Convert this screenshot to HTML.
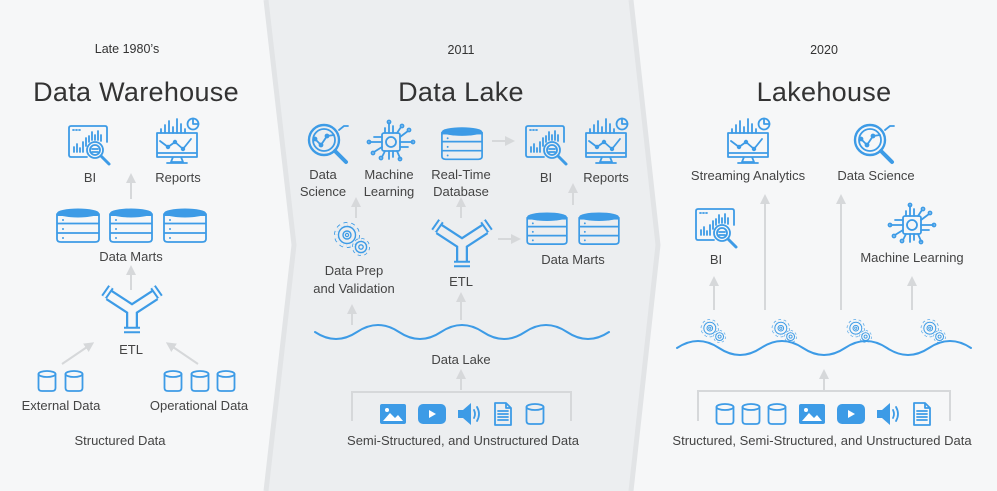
<!DOCTYPE html>
<html><head><meta charset="utf-8"><style>
html,body{margin:0;padding:0;background:#f6f7f8;}
svg{display:block}
text{font-family:"Liberation Sans",sans-serif;fill:#3a3a3a;}
.l{font-size:13px;text-anchor:middle;fill:#444}
.h{font-size:27px;text-anchor:middle;fill:#333;letter-spacing:0.3px}
.y{font-size:12.5px;text-anchor:middle;fill:#333}
.b{stroke:#3d9be6;fill:none;stroke-width:1.8;stroke-linecap:round;stroke-linejoin:round}
.f{fill:#3d9be6}
.ar{stroke:#d6d8da;stroke-width:2;fill:none}
</style></head><body>
<svg width="997" height="491" viewBox="0 0 997 491" xmlns="http://www.w3.org/2000/svg">
<defs>
<symbol id="db" viewBox="0 0 46 36" overflow="visible">
 <path class="b" d="M2,6 V31 Q2,34 6,34 H40 Q44,34 44,31 V6 M2,15.5 H44 M2,25 H44"/>
 <ellipse class="f" cx="23" cy="5" rx="21" ry="4.5"/>
 <rect class="f" x="2" y="5" width="42" height="3"/>
 <circle class="f" cx="8" cy="12" r="1"/><circle class="f" cx="8" cy="21" r="1"/><circle class="f" cx="8" cy="30" r="1"/>
</symbol>
<symbol id="cyl" viewBox="0 0 20 22" overflow="visible">
 <ellipse class="b" cx="10" cy="4" rx="8.5" ry="3"/>
 <path class="b" d="M1.5,4 V18 Q1.5,21 5,21 H15 Q18.5,21 18.5,18 V4"/>
</symbol>
<symbol id="bi" viewBox="0 0 44 42" overflow="visible">
 <path class="b" d="M19,33 H3 Q1,33 1,31 V4 Q1,2 3,2 H37 Q39,2 39,4 V18"/>
 <path class="b" d="M5,6 h1 M8,6 h1 M11,6 h1"/>
 <path class="b" d="M6,28 v-5 M9,28 v-8 M12,28 v-4 M15,28 v-10 M18,22 v-8 M21,18 v-6 M24,16 v-8 M27,16 v-5 M30,16 v-9 M33,17 v-6"/>
 <circle class="b" cx="27" cy="26" r="8"/><circle class="b" cx="27" cy="26" r="5"/>
 <path class="b" d="M24,25 h6 M24,28 h6"/>
 <path class="b" d="M33,32 L41,40" style="stroke-width:3"/>
</symbol>
<symbol id="rep" viewBox="0 0 48 48" overflow="visible">
 <path class="b" d="M4,16 H44 V40 H4 Z M4,36 H44 M20,40 l-2,5 H30 l-2,-5 M14,46 H34"/>
 <path class="b" d="M8,16 v-4 M12,16 v-8 M16,16 v-12 M20,16 v-6 M24,16 v-14 M28,16 v-9 M32,16 v-4"/>
 <circle class="b" cx="40" cy="7" r="5.5"/><path class="b" d="M40,7 V1.5 M40,7 H45.5"/>
 <path class="b" d="M7,24 L15,30 L22,25 L30,32 L38,22"/>
 <circle class="b" cx="15" cy="30" r="1.3"/><circle class="b" cx="22" cy="25" r="1.3"/><circle class="b" cx="30" cy="32" r="1.3"/>
</symbol>
<symbol id="ds" viewBox="0 0 44 42" overflow="visible">
 <circle class="b" cx="18" cy="18" r="15" style="stroke-width:2.4"/>
 <circle class="b" cx="18" cy="18" r="11"/>
 <path class="b" d="M29,29 L40,40" style="stroke-width:4"/>
 <path class="b" d="M9,17 L15,23 L21,14 L28,13 M33,8 L38,4 H42"/>
 <circle class="b" cx="9" cy="17" r="1.5"/><circle class="b" cx="15" cy="23" r="1.5"/><circle class="b" cx="21" cy="14" r="1.5"/>
</symbol>
<symbol id="ml" viewBox="0 0 48 44" overflow="visible">
 <rect class="b" x="15" y="13" width="18" height="18" rx="2"/>
 <circle class="b" cx="24" cy="22" r="5"/>
 <path class="b" d="M18,13 v-5 M22,13 V3 M26,13 V6 M30,13 l4,-6 M18,31 l-3,6 M22,31 v8 M26,31 v6 M30,31 l3,7 M15,17 H7 M15,22 H3 M15,27 l-8,5 M33,17 l8,-6 M33,22 H45 M33,27 H41"/>
 <circle class="b" cx="22" cy="2" r="1.5"/><circle class="b" cx="35" cy="6" r="1.5"/><circle class="b" cx="14" cy="38" r="1.5"/><circle class="b" cx="33" cy="39" r="1.5"/><circle class="b" cx="2" cy="22" r="1.5"/><circle class="b" cx="6" cy="33" r="1.5"/><circle class="b" cx="42" cy="10" r="1.5"/><circle class="b" cx="46" cy="22" r="1.5"/>
</symbol>
<symbol id="gear" viewBox="0 0 40 34" overflow="visible">
 <circle cx="14" cy="13" r="10.5" style="fill:none;stroke:#3d9be6;stroke-width:5;stroke-dasharray:3.3 3.3"/>
 <circle cx="14" cy="13" r="10.5" style="fill:none;stroke:var(--bg);stroke-width:3.2;stroke-dasharray:3.3 3.3"/>
 <circle cx="14" cy="13" r="8.5" style="fill:var(--bg);stroke:#3d9be6;stroke-width:1.4"/>
 <circle class="b" cx="14" cy="13" r="4" style="stroke-width:1.4"/><circle class="b" cx="14" cy="13" r="1.6" style="stroke-width:1.2"/>
 <circle cx="28" cy="25" r="7" style="fill:none;stroke:#3d9be6;stroke-width:4;stroke-dasharray:2.7 2.8"/>
 <circle cx="28" cy="25" r="7" style="fill:none;stroke:var(--bg);stroke-width:2.4;stroke-dasharray:2.7 2.8"/>
 <circle cx="28" cy="25" r="5.6" style="fill:var(--bg);stroke:#3d9be6;stroke-width:1.4"/>
 <circle class="b" cx="28" cy="25" r="2.2" style="stroke-width:1.3"/>
</symbol>
<symbol id="etl" viewBox="0 0 60 48" overflow="visible">
 <path d="M7,9 L30,24 L53,9 M30,24 V44" style="fill:none;stroke:#3d9be6;stroke-width:12;stroke-linejoin:miter"/>
 <path d="M7,9 L30,24 L53,9 M30,24 V44" style="fill:none;stroke:var(--bg);stroke-width:7.5;stroke-linejoin:miter"/>
 <path d="M2,11 L9,1 M51,1 L58,11 M22,44 H38" style="fill:none;stroke:#3d9be6;stroke-width:6.5"/>
 <path d="M2,11 L9,1 M51,1 L58,11 M22,44 H38" style="fill:none;stroke:var(--bg);stroke-width:2.5"/>
</symbol>
<symbol id="img" viewBox="0 0 26 20" overflow="visible">
 <rect class="f" x="0" y="0" width="26" height="20" rx="2"/>
 <path d="M3,17 L10,9 L15,14 L18,11 L23,17 Z" fill="#fff"/><circle cx="7" cy="6" r="2" fill="#fff"/>
</symbol>
<symbol id="vid" viewBox="0 0 28 20" overflow="visible">
 <rect class="f" x="0" y="0" width="28" height="20" rx="5"/><path d="M11,6 L18,10 L11,14 Z" fill="#fff"/>
</symbol>
<symbol id="spk" viewBox="0 0 24 24" overflow="visible">
 <path class="f" d="M1,8 H6 L14,1 V23 L6,16 H1 Z"/>
 <path class="b" d="M17,8 Q19,12 17,16 M20,5 Q24,12 20,19"/>
</symbol>
<symbol id="doc" viewBox="0 0 18 24" overflow="visible">
 <path class="b" d="M1,1 H12 L17,6 V23 H1 Z M12,1 V6 H17 M4,9 H14 M4,12 H14 M4,15 H14 M4,18 H14"/>
</symbol>
<marker id="m" viewBox="0 0 10 10" refX="5" refY="5" markerWidth="5" markerHeight="5" orient="auto"><path d="M0,0 L10,5 L0,10 Z" fill="#d6d8da"/></marker>
</defs>

<polygon points="266,0 631,0 658,245 631,491 266,491 294,245" fill="#eceef0"/>
<polyline points="266,0 294,245 266,491" fill="none" stroke="#e2e4e6" stroke-width="5"/>
<polyline points="631,0 658,245 631,491" fill="none" stroke="#e2e4e6" stroke-width="5"/>

<!-- LEFT -->
<text class="y" x="127" y="53">Late 1980’s</text>
<text class="h" x="136" y="101">Data Warehouse</text>
<use href="#bi" x="68" y="124" width="44" height="42"/>
<use href="#rep" x="153" y="117" width="48" height="48"/>
<text class="l" x="90" y="182">BI</text>
<text class="l" x="178" y="182">Reports</text>
<line class="ar" x1="131" y1="199" x2="131" y2="178" marker-end="url(#m)"/>
<use href="#db" x="55" y="208" width="46" height="36"/>
<use href="#db" x="108" y="208" width="46" height="36"/>
<use href="#db" x="162" y="208" width="46" height="36"/>
<text class="l" x="131" y="261">Data Marts</text>
<line class="ar" x1="131" y1="290" x2="131" y2="270" marker-end="url(#m)"/>
<use href="#etl" x="102" y="286" width="60" height="48" style="--bg:#f6f7f8"/>
<text class="l" x="131" y="354">ETL</text>
<line class="ar" x1="62" y1="364" x2="90" y2="345" marker-end="url(#m)"/>
<line class="ar" x1="198" y1="364" x2="170" y2="345" marker-end="url(#m)"/>
<use href="#cyl" x="37" y="370" width="20" height="22"/>
<use href="#cyl" x="64" y="370" width="20" height="22"/>
<use href="#cyl" x="163" y="370" width="20" height="22"/>
<use href="#cyl" x="190" y="370" width="20" height="22"/>
<use href="#cyl" x="216" y="370" width="20" height="22"/>
<text class="l" x="61" y="410">External Data</text>
<text class="l" x="199" y="410">Operational Data</text>
<text class="l" x="120" y="445">Structured Data</text>

<!-- MIDDLE -->
<text class="y" x="461" y="54">2011</text>
<text class="h" x="461" y="101">Data Lake</text>
<use href="#ds" x="306" y="122" width="44" height="42"/>
<use href="#ml" x="367" y="120" width="48" height="44"/>
<use href="#db" x="440" y="126" width="44" height="36"/>
<line class="ar" x1="492" y1="141" x2="510" y2="141" marker-end="url(#m)"/>
<use href="#bi" x="525" y="124" width="44" height="42"/>
<use href="#rep" x="582" y="117" width="48" height="48"/>
<text class="l" x="323" y="179">Data</text><text class="l" x="323" y="196">Science</text>
<text class="l" x="389" y="179">Machine</text><text class="l" x="389" y="196">Learning</text>
<text class="l" x="461" y="179">Real-Time</text><text class="l" x="461" y="196">Database</text>
<text class="l" x="546" y="182">BI</text>
<text class="l" x="606" y="182">Reports</text>
<line class="ar" x1="573" y1="205" x2="573" y2="188" marker-end="url(#m)"/>
<line class="ar" x1="356" y1="218" x2="356" y2="202" marker-end="url(#m)"/>
<line class="ar" x1="461" y1="218" x2="461" y2="202" marker-end="url(#m)"/>
<use href="#gear" x="333" y="222" width="40" height="34" style="--bg:#eceef0"/>
<text class="l" x="354" y="275">Data Prep</text><text class="l" x="354" y="293">and Validation</text>
<use href="#etl" x="432" y="220" width="60" height="48" style="--bg:#eceef0"/>
<text class="l" x="461" y="286">ETL</text>
<line class="ar" x1="498" y1="239" x2="516" y2="239" marker-end="url(#m)"/>
<use href="#db" x="525" y="212" width="44" height="34"/>
<use href="#db" x="577" y="212" width="44" height="34"/>
<text class="l" x="573" y="264">Data Marts</text>
<line class="ar" x1="352" y1="325" x2="352" y2="309" marker-end="url(#m)"/>
<line class="ar" x1="461" y1="320" x2="461" y2="297" marker-end="url(#m)"/>
<path class="b" d="M315,332 q21,14 42,0 t42,0 t42,0 t42,0 t42,0 t42,0 t42,0" style="stroke-width:2"/>
<text class="l" x="461" y="364">Data Lake</text>
<line class="ar" x1="461" y1="390" x2="461" y2="374" marker-end="url(#m)"/>
<path class="ar" d="M352,421 V392 H571 V421"/>
<use href="#img" x="380" y="404" width="26" height="20"/>
<use href="#vid" x="418" y="404" width="28" height="20"/>
<use href="#spk" x="457" y="402" width="24" height="24"/>
<use href="#doc" x="494" y="402" width="18" height="24"/>
<use href="#cyl" x="525" y="403" width="20" height="22"/>
<text class="l" x="463" y="445">Semi-Structured, and Unstructured Data</text>

<!-- RIGHT -->
<text class="y" x="824" y="54">2020</text>
<text class="h" x="824" y="101">Lakehouse</text>
<use href="#rep" x="724" y="117" width="48" height="48"/>
<use href="#ds" x="852" y="122" width="44" height="42"/>
<text class="l" x="748" y="180">Streaming Analytics</text>
<text class="l" x="876" y="180">Data Science</text>
<use href="#bi" x="695" y="207" width="44" height="42"/>
<text class="l" x="716" y="264">BI</text>
<use href="#ml" x="888" y="203" width="48" height="44"/>
<text class="l" x="912" y="262">Machine Learning</text>
<line class="ar" x1="714" y1="310" x2="714" y2="281" marker-end="url(#m)"/>
<line class="ar" x1="765" y1="310" x2="765" y2="199" marker-end="url(#m)"/>
<line class="ar" x1="841" y1="310" x2="841" y2="199" marker-end="url(#m)"/>
<line class="ar" x1="912" y1="310" x2="912" y2="281" marker-end="url(#m)"/>
<use href="#gear" x="700" y="319" width="28" height="24" style="--bg:#f6f7f8"/>
<use href="#gear" x="771" y="319" width="28" height="24" style="--bg:#f6f7f8"/>
<use href="#gear" x="846" y="319" width="28" height="24" style="--bg:#f6f7f8"/>
<use href="#gear" x="920" y="319" width="28" height="24" style="--bg:#f6f7f8"/>
<path class="b" d="M677,348 q21,-14 42,0 t42,0 t42,0 t42,0 t42,0 t42,0 t42,0" style="stroke-width:2"/>
<line class="ar" x1="824" y1="390" x2="824" y2="374" marker-end="url(#m)"/>
<path class="ar" d="M698,421 V391 H950 V421"/>
<use href="#cyl" x="715" y="403" width="20" height="22"/>
<use href="#cyl" x="741" y="403" width="20" height="22"/>
<use href="#cyl" x="767" y="403" width="20" height="22"/>
<use href="#img" x="799" y="404" width="26" height="20"/>
<use href="#vid" x="837" y="404" width="28" height="20"/>
<use href="#spk" x="876" y="402" width="24" height="24"/>
<use href="#doc" x="913" y="402" width="18" height="24"/>
<text class="l" x="822" y="445">Structured, Semi-Structured, and Unstructured Data</text>
</svg>
</body></html>
